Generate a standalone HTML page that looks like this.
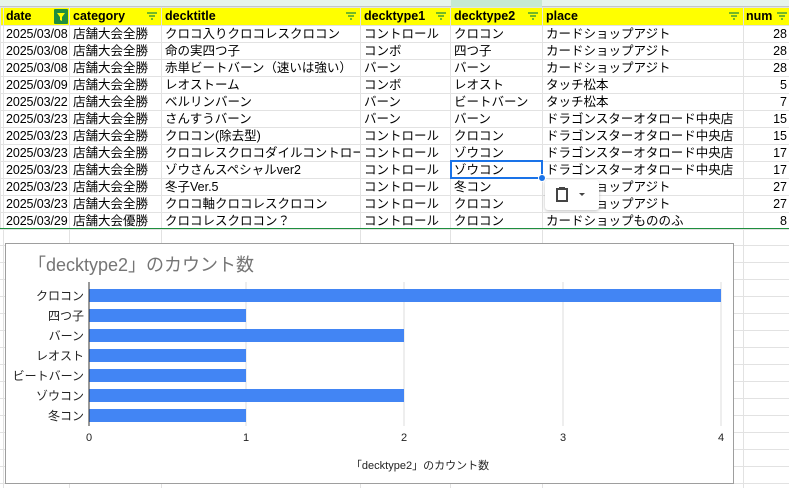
<!DOCTYPE html>
<html><head><meta charset="utf-8"><style>
*{margin:0;padding:0;box-sizing:border-box}
body{width:789px;height:488px;overflow:hidden;background:#fff;position:relative;font-family:"Liberation Sans","Noto Sans CJK JP",sans-serif}
.bg{position:absolute;left:0;top:229px;width:789px;height:259px;
background-image:repeating-linear-gradient(to bottom,transparent 0,transparent 16px,#e2e2e2 16px,#e2e2e2 17px);}
.vl{position:absolute;top:0;width:1px;height:488px;background:#e2e2e2}
.top{position:absolute;left:0;top:0;width:789px;height:7px;background:#e6f4ea;border-bottom:1px solid #c4c7c5}
table{position:absolute;left:0;top:7px;width:789px;border-collapse:collapse;table-layout:fixed;font-size:12.5px}
td{height:17px;border:1px solid #e2e2e2;white-space:nowrap;overflow:hidden;padding:0 2px 0 3px;line-height:15px;color:#000}
td.d{padding-left:2px;letter-spacing:-0.1px}
tr.h td{background:#ffff00;font-weight:bold;height:18px;position:relative}
td.r{text-align:right}
.f{position:absolute;right:4px;top:4px;width:10px;height:8px}
.chart{position:absolute;left:5px;top:243px;width:729px;height:241px;border:1px solid #9e9e9e;background:#fff}
</style></head><body>
<div class="bg"></div>
<div class="vl" style="left:3px"></div><div class="vl" style="left:69px"></div><div class="vl" style="left:161px"></div><div class="vl" style="left:360px"></div><div class="vl" style="left:450px"></div><div class="vl" style="left:542px"></div><div class="vl" style="left:743px"></div>
<div class="top"></div>
<div style="position:absolute;left:451px;top:0;width:91px;height:7px;background:#c6e9d2"></div>
<table>
<colgroup><col style="width:3px"><col style="width:66px"><col style="width:92px"><col style="width:199px"><col style="width:90px"><col style="width:92px"><col style="width:201px"><col style="width:46px"></colgroup>
<tr class="h"><td style="padding:0"></td><td class="d">date<svg style="position:absolute;left:50px;top:1px" width="14" height="15"><rect width="14" height="15" rx="1" fill="#1e8e3e"/><path d="M3 4h8l-3 4v4l-2-1v-3z" fill="#ffff00"/></svg></td><td>category<svg class="f"><path d="M0 1h10M2 4h6M4 7h2" stroke="#1e8e3e" stroke-width="1.3"/></svg></td><td>decktitle<svg class="f"><path d="M0 1h10M2 4h6M4 7h2" stroke="#1e8e3e" stroke-width="1.3"/></svg></td><td>decktype1<svg class="f"><path d="M0 1h10M2 4h6M4 7h2" stroke="#1e8e3e" stroke-width="1.3"/></svg></td><td>decktype2<svg class="f"><path d="M0 1h10M2 4h6M4 7h2" stroke="#1e8e3e" stroke-width="1.3"/></svg></td><td>place<svg class="f"><path d="M0 1h10M2 4h6M4 7h2" stroke="#1e8e3e" stroke-width="1.3"/></svg></td><td style="padding:0 0 0 2px">num<svg class="f" style="right:2px;background:#ffff00"><path d="M0 1h10M2 4h6M4 7h2" stroke="#1e8e3e" stroke-width="1.3"/></svg></td></tr>
<tr><td></td><td class="d">2025/03/08</td><td>店舗大会全勝</td><td>クロコ入りクロコレスクロコン</td><td>コントロール</td><td>クロコン</td><td>カードショップアジト</td><td class="r">28</td></tr>
<tr><td></td><td class="d">2025/03/08</td><td>店舗大会全勝</td><td>命の実四つ子</td><td>コンボ</td><td>四つ子</td><td>カードショップアジト</td><td class="r">28</td></tr>
<tr><td></td><td class="d">2025/03/08</td><td>店舗大会全勝</td><td>赤単ビートバーン（速いは強い）</td><td>バーン</td><td>バーン</td><td>カードショップアジト</td><td class="r">28</td></tr>
<tr><td></td><td class="d">2025/03/09</td><td>店舗大会全勝</td><td>レオストーム</td><td>コンボ</td><td>レオスト</td><td>タッチ松本</td><td class="r">5</td></tr>
<tr><td></td><td class="d">2025/03/22</td><td>店舗大会全勝</td><td>ベルリンバーン</td><td>バーン</td><td>ビートバーン</td><td>タッチ松本</td><td class="r">7</td></tr>
<tr><td></td><td class="d">2025/03/23</td><td>店舗大会全勝</td><td>さんすうバーン</td><td>バーン</td><td>バーン</td><td>ドラゴンスターオタロード中央店</td><td class="r">15</td></tr>
<tr><td></td><td class="d">2025/03/23</td><td>店舗大会全勝</td><td>クロコン(除去型)</td><td>コントロール</td><td>クロコン</td><td>ドラゴンスターオタロード中央店</td><td class="r">15</td></tr>
<tr><td></td><td class="d">2025/03/23</td><td>店舗大会全勝</td><td>クロコレスクロコダイルコントロール</td><td>コントロール</td><td>ゾウコン</td><td>ドラゴンスターオタロード中央店</td><td class="r">17</td></tr>
<tr><td></td><td class="d">2025/03/23</td><td>店舗大会全勝</td><td>ゾウさんスペシャルver2</td><td>コントロール</td><td>ゾウコン</td><td>ドラゴンスターオタロード中央店</td><td class="r">17</td></tr>
<tr><td></td><td class="d">2025/03/23</td><td>店舗大会全勝</td><td>冬子Ver.5</td><td>コントロール</td><td>冬コン</td><td>カードショップアジト</td><td class="r">27</td></tr>
<tr><td></td><td class="d">2025/03/23</td><td>店舗大会全勝</td><td>クロコ軸クロコレスクロコン</td><td>コントロール</td><td>クロコン</td><td>カードショップアジト</td><td class="r">27</td></tr>
<tr><td></td><td class="d">2025/03/29</td><td>店舗大会優勝</td><td>クロコレスクロコン？</td><td>コントロール</td><td>クロコン</td><td>カードショップもののふ</td><td class="r">8</td></tr>
</table>
<div style="position:absolute;left:0;top:228px;width:789px;height:1px;background:#1e8e3e"></div>
<div style="position:absolute;left:450px;top:160px;width:93px;height:19px;border:2px solid #1a73e8"></div>
<div style="position:absolute;left:538px;top:174px;width:8px;height:8px;border-radius:50%;background:#1a73e8;border:1px solid #fff"></div>
<div style="position:absolute;left:545px;top:180px;width:54px;height:30px;background:#fff;box-shadow:0 1px 3px rgba(0,0,0,.25);border-radius:3px">
<svg width="54" height="30"><rect x="12" y="9" width="10" height="12" fill="none" stroke="#444" stroke-width="2"/><rect x="14" y="7" width="6" height="3" fill="#444"/><path d="M34 13h6l-3 3z" fill="#444"/></svg></div>
<div class="chart">
<svg width="727" height="239" style="position:absolute;left:0;top:0;font-family:'Liberation Sans','Noto Sans CJK JP',sans-serif">
<text x="22" y="27" font-size="18" fill="#757575">「decktype2」のカウント数</text>
<g stroke="#dcdcdc"><line x1="240" y1="38" x2="240" y2="182"/><line x1="398" y1="38" x2="398" y2="182"/><line x1="557" y1="38" x2="557" y2="182"/><line x1="715" y1="38" x2="715" y2="182"/></g>
<g fill="#4285f4">
<rect x="83" y="45" width="632" height="13"/>
<rect x="83" y="65" width="157" height="13"/>
<rect x="83" y="85" width="315" height="13"/>
<rect x="83" y="105" width="157" height="13"/>
<rect x="83" y="125" width="157" height="13"/>
<rect x="83" y="145" width="315" height="13"/>
<rect x="83" y="165" width="157" height="13"/>
</g>
<line x1="83" y1="38" x2="83" y2="182" stroke="#333"/>
<g font-size="12" fill="#222" text-anchor="end">
<text x="78" y="56">クロコン</text><text x="78" y="76">四つ子</text><text x="78" y="96">バーン</text><text x="78" y="116">レオスト</text><text x="78" y="136">ビートバーン</text><text x="78" y="156">ゾウコン</text><text x="78" y="176">冬コン</text>
</g>
<g font-size="11" fill="#222" text-anchor="middle">
<text x="83" y="197">0</text><text x="240" y="197">1</text><text x="398" y="197">2</text><text x="557" y="197">3</text><text x="715" y="197">4</text>
<text x="414" y="225">「decktype2」のカウント数</text>
</g>
</svg>
</div>
</body></html>
